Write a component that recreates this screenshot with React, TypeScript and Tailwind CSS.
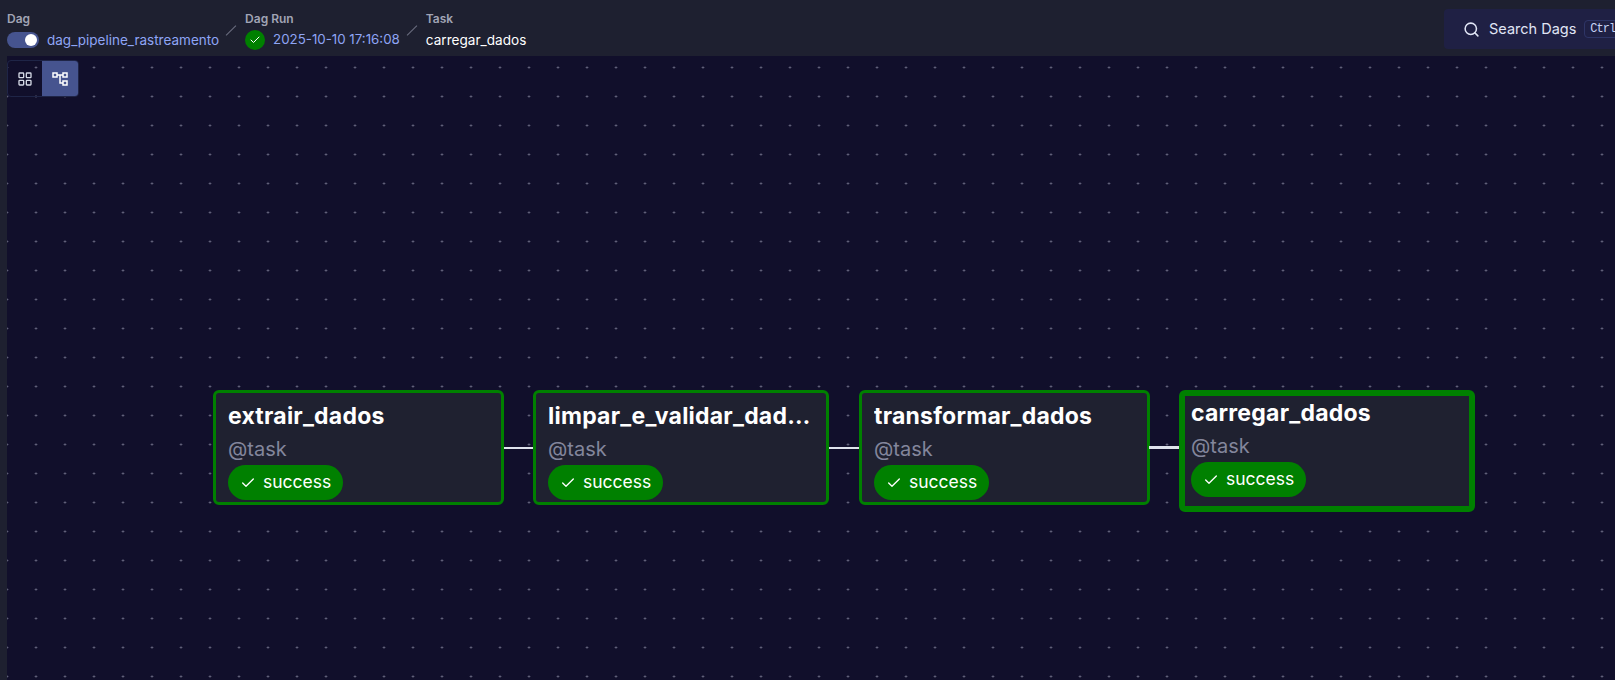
import { Search, LayoutGrid, Check } from "lucide-react";

function Flow() {
  return (
    <svg width="16" height="16" viewBox="0 0 16 16" fill="none" stroke="currentColor" strokeWidth="1.5">
      <rect x="1" y="2" width="4" height="4" />
      <rect x="11" y="2" width="4" height="4" />
      <rect x="11" y="10" width="4" height="4" />
      <path d="M5 4h6M8 4v8h3" />
    </svg>
  );
}

function TaskNode({ name, className, selected }: { name: string; className: string; selected?: boolean }) {
  return (
    <div
      className={`absolute bg-[#1f2130] border-[#008000] rounded-md ${selected ? "border-[6px] pl-[6px] pt-[2px]" : "border-[3px] pl-3 pt-[8px]"} ${className}`}
    >
      <div className="text-[23px] tracking-[0.01em] leading-[30px] font-bold text-white truncate pr-3">{name}</div>
      <div className="text-[20px] leading-[26px] mt-[5px] text-[#83869c]">@task</div>
      <div className="mt-[3px] inline-flex items-center gap-[7px] h-[35px] rounded-full bg-[#008000] pl-3 pr-[12px] text-white text-[17.5px]">
        <Check size={16} strokeWidth={2} className="shrink-0" />
        <span>success</span>
      </div>
    </div>
  );
}

function Edge({ className }: { className: string }) {
  return <div className={`absolute bg-[#dfe3ec] ${className}`} />;
}

export default function App() {
  return (
    <div className="w-[1615px] h-[680px] overflow-hidden bg-[#1e2030] flex flex-col font-['Inter',sans-serif]">
      <header className="h-[56px] shrink-0 flex items-start justify-between pl-[7px]">
        <div className="flex items-start pt-[12px]">
          <div className="flex flex-col">
            <span className="text-[12px] leading-[14px] font-semibold text-[#a1a4b5]">Dag</span>
            <div className="flex items-center gap-2 mt-[3px] h-[22px]">
              <div className="w-[32px] h-[16px] rounded-full bg-[#46548f] flex items-center justify-end pr-[2px]">
                <div className="w-[12px] h-[12px] rounded-full bg-white" />
              </div>
              <span className="text-[13.5px] text-[#8fa5f5]">dag_pipeline_rastreamento</span>
            </div>
          </div>
          <div className="w-[14px] h-px bg-[#6b6e80] -rotate-45 mt-[18px] mx-[5px]" />
          <div className="flex flex-col ml-[2px]">
            <span className="text-[12px] leading-[14px] font-semibold text-[#a1a4b5]">Dag Run</span>
            <div className="flex items-center gap-2 mt-[3px] h-[22px]">
              <div className="w-[20px] h-[20px] rounded-full bg-[#008000] flex items-center justify-center text-white">
                <Check size={12} strokeWidth={2} />
              </div>
              <span className="text-[13.3px] text-[#8fa5f5]">2025-10-10 17:16:08</span>
            </div>
          </div>
          <div className="w-[14px] h-px bg-[#6b6e80] -rotate-45 mt-[18px] mx-[5px]" />
          <div className="flex flex-col ml-[2px]">
            <span className="text-[12px] leading-[14px] font-semibold text-[#a1a4b5]">Task</span>
            <span className="text-[13.6px] leading-[22px] mt-[3px] text-white">carregar_dados</span>
          </div>
        </div>
        <div className="mt-[9px] w-[171px] h-[40px] shrink-0 rounded-l bg-[#1f2044] flex items-center pl-[19px] text-[#e0e5f5] overflow-hidden">
          <Search size={17} strokeWidth={2.2} className="shrink-0" />
          <span className="ml-[9px] text-[14.5px] whitespace-nowrap">Search Dags</span>
          <span className="ml-2 shrink-0 pl-[5px] pr-[2px] h-[18px] border border-[#2e3566] rounded text-[12px] tracking-[-1px] leading-[16px] font-['Liberation_Mono',monospace] text-[#c6d2f5]">Ctrl</span>
        </div>
      </header>
      <main className="relative flex-1 ml-[7px] bg-[#110f2b] bg-[radial-gradient(circle,#7a7a92_0.9px,transparent_1.1px)] bg-[size:29px_29px] bg-[position:-14.5px_-32px]">
        <div className="absolute left-0 top-[4px] flex h-[37px] w-[72px] rounded border border-[#1f2547] overflow-hidden">
          <div className="flex-1 flex items-center justify-center text-[#d5d9e6]">
            <LayoutGrid size={16} />
          </div>
          <div className="w-[36px] flex items-center justify-center bg-[#46548f] text-white">
            <Flow />
          </div>
        </div>

        <TaskNode name="extrair_dados" className="left-[206px] top-[334px] w-[291px] h-[115px]" />
        <Edge className="left-[497px] top-[391px] w-[30px] h-[2px]" />
        <TaskNode name="limpar_e_validar_dados" className="left-[526px] top-[334px] w-[296px] h-[115px]" />
        <Edge className="left-[822px] top-[391px] w-[30px] h-[2px]" />
        <TaskNode name="transformar_dados" className="left-[852px] top-[334px] w-[291px] h-[115px]" />
        <Edge className="left-[1142px] top-[390px] w-[32px] h-[3px]" />
        <TaskNode name="carregar_dados" selected className="left-[1172px] top-[334px] w-[296px] h-[122px]" />
      </main>
    </div>
  );
}
